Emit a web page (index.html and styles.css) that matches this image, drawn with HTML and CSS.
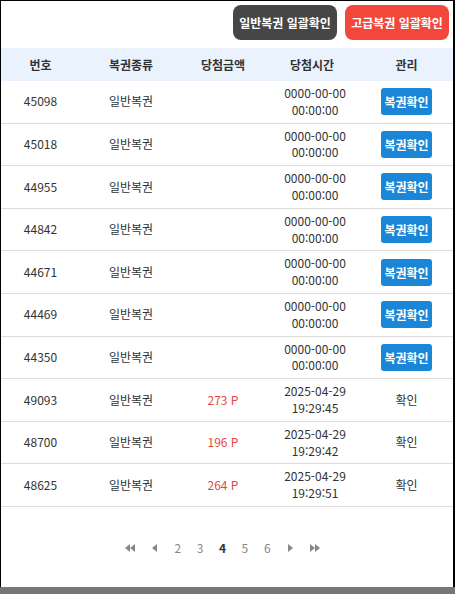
FILE: index.html
```html
<!DOCTYPE html>
<html lang="ko">
  <head>
    <meta charset="UTF-8">
    <meta name="viewport" content="width=device-width, initial-scale=1.0">
    <title>당첨내역</title>
    <link rel="stylesheet" href="styles.css">
  </head>
  <body>
    <div class="frame">
      <div class="top-bar">
        <button class="btn btn-dark">일반복권 일괄확인</button>
        <button class="btn btn-red">고급복권 일괄확인</button>
      </div>

      <table class="list">
        <colgroup>
          <col class="c1"><col class="c2"><col class="c3"><col class="c4"><col class="c5">
        </colgroup>
        <thead>
          <tr>
            <th>번호</th>
            <th>복권종류</th>
            <th>당첨금액</th>
            <th>당첨시간</th>
            <th>관리</th>
          </tr>
        </thead>
        <tbody>
          <tr><td>45098</td><td>일반복권</td><td></td><td class="time">0000-00-00<br>00:00:00</td><td><button class="btn-check">복권확인</button></td></tr>
          <tr><td>45018</td><td>일반복권</td><td></td><td class="time">0000-00-00<br>00:00:00</td><td><button class="btn-check">복권확인</button></td></tr>
          <tr><td>44955</td><td>일반복권</td><td></td><td class="time">0000-00-00<br>00:00:00</td><td><button class="btn-check">복권확인</button></td></tr>
          <tr><td>44842</td><td>일반복권</td><td></td><td class="time">0000-00-00<br>00:00:00</td><td><button class="btn-check">복권확인</button></td></tr>
          <tr><td>44671</td><td>일반복권</td><td></td><td class="time">0000-00-00<br>00:00:00</td><td><button class="btn-check">복권확인</button></td></tr>
          <tr><td>44469</td><td>일반복권</td><td></td><td class="time">0000-00-00<br>00:00:00</td><td><button class="btn-check">복권확인</button></td></tr>
          <tr><td>44350</td><td>일반복권</td><td></td><td class="time">0000-00-00<br>00:00:00</td><td><button class="btn-check">복권확인</button></td></tr>
          <tr><td>49093</td><td>일반복권</td><td class="point">273 P</td><td class="time">2025-04-29<br>19:29:45</td><td>확인</td></tr>
          <tr><td>48700</td><td>일반복권</td><td class="point">196 P</td><td class="time">2025-04-29<br>19:29:42</td><td>확인</td></tr>
          <tr><td>48625</td><td>일반복권</td><td class="point">264 P</td><td class="time">2025-04-29<br>19:29:51</td><td>확인</td></tr>
        </tbody>
      </table>

      <div class="paging">
        <a class="arrow" href="#">
          <svg width="12" height="8" viewBox="0 0 12 8"><path d="M6 0v8L1 4zM11 0v8L6 4z" fill="#888"/></svg>
        </a>
        <a class="arrow" href="#">
          <svg width="6" height="8" viewBox="0 0 6 8"><path d="M5 0v8L0 4z" fill="#888"/></svg>
        </a>
        <a href="#">2</a>
        <a href="#">3</a>
        <a class="on" href="#">4</a>
        <a href="#">5</a>
        <a href="#">6</a>
        <a class="arrow" href="#">
          <svg width="6" height="8" viewBox="0 0 6 8"><path d="M1 0v8l5-4z" fill="#888"/></svg>
        </a>
        <a class="arrow" href="#">
          <svg width="12" height="8" viewBox="0 0 12 8"><path d="M1 0v8l5-4zM6 0v8l5-4z" fill="#888"/></svg>
        </a>
      </div>
    </div>
    <div class="bottom-bar"></div>
  </body>
</html>
```

FILE: styles.css
```css
body {
  margin: 0;
  padding: 0;
  font-family: "Noto Sans CJK KR", "Noto Sans", sans-serif;
  font-size: 12px;
  color: #333;
  background-color: #fff;
}

.frame {
  height: 587px;
  box-sizing: border-box;
  border-top: 1px solid #000;
  border-left: 1px solid #000;
  border-right: 2px solid #000;
}

.top-bar {
  display: flex;
  justify-content: flex-end;
  gap: 8px;
  padding: 4px 4px 8px 0;
}

.btn {
  height: 35px;
  width: 104px;
  padding: 0;
  border: none;
  border-radius: 8px;
  color: #fff;
  font-family: inherit;
  font-size: 12px;
  font-weight: bold;
  cursor: pointer;
}

.btn-dark {
  background-color: #464646;
}

.btn-red {
  background-color: #f2473a;
}

.list {
  width: 100%;
  border-collapse: collapse;
  table-layout: fixed;
}

.c1 { width: 79px; }
.c2 { width: 102px; }
.c3 { width: 82px; }
.c4 { width: 96px; }
.c5 { width: 93px; }

.list th {
  height: 33px;
  padding: 0;
  background-color: #eaf2fd;
  font-weight: bold;
  color: #333;
}

.list td {
  height: 33.6px;
  padding: 4px 0;
  line-height: 16.8px;
  text-align: center;
  border-bottom: 1px solid #dcdcdc;
  color: #333;
}

.list td.time {
  padding-left: 6px;
}

.list td.point {
  color: #e5483f;
}

.btn-check {
  width: 51px;
  height: 27px;
  padding: 0;
  border: none;
  border-radius: 3px;
  background-color: #1a86d8;
  color: #fff;
  font-family: inherit;
  font-size: 12px;
  font-weight: bold;
  cursor: pointer;
}

.paging {
  display: flex;
  justify-content: center;
  align-items: center;
  margin-top: 33px;
  padding-right: 9px;
}

.paging a {
  width: 22.4px;
  text-align: center;
  color: #888;
  text-decoration: none;
  font-size: 12px;
  line-height: 16px;
}

.paging a.on {
  color: #333;
  font-weight: bold;
}

.paging a.arrow {
  display: flex;
  justify-content: center;
}

.paging a.arrow:first-child {
  margin-right: 3px;
}

.paging a.arrow:last-child {
  margin-left: 3px;
}

.bottom-bar {
  height: 7px;
  background-color: #777;
}
```
